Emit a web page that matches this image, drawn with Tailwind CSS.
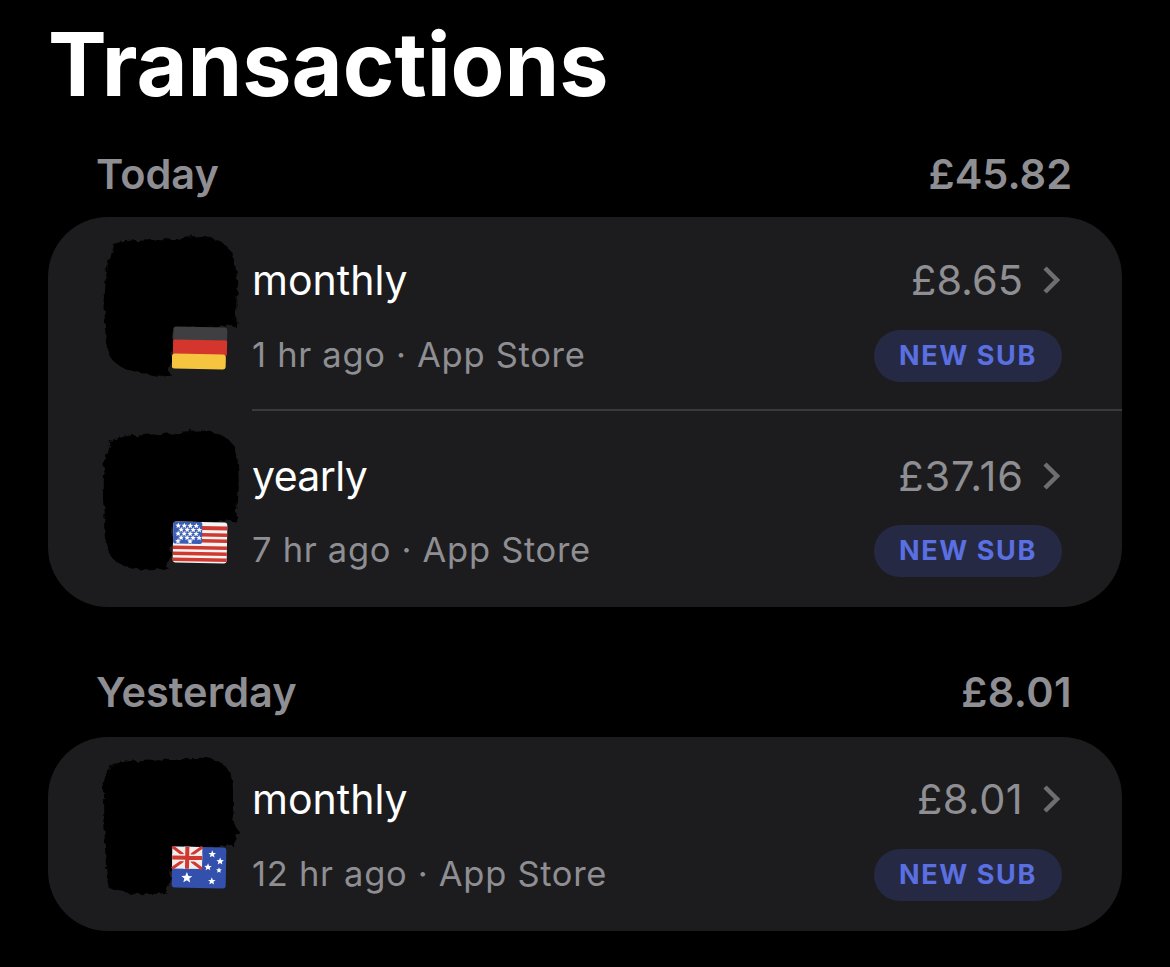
<!DOCTYPE html>
<html lang="en">
<head>
    <meta charset="UTF-8">
    <title>Transactions</title>
    <script src="https://cdn.jsdelivr.net/npm/@tailwindcss/browser@4"></script>
</head>
<body class="bg-black font-['Inter','Liberation_Sans',sans-serif] w-[1170px] h-[967px] overflow-hidden">
    <!-- shared bits for the flags and the scribbled-out app icons -->
    <svg class="absolute w-0 h-0">
        <defs>
            <filter id="rough" x="-10%" y="-10%" width="120%" height="120%">
                <feTurbulence type="fractalNoise" baseFrequency="0.12" numOctaves="3" seed="4"/>
                <feDisplacementMap in="SourceGraphic" scale="7"/>
            </filter>
            <path id="star" d="M0 -3 L0.8 -1 L2.9 -0.9 L1.3 0.4 L1.8 2.4 L0 1.3 L-1.8 2.4 L-1.3 0.4 L-2.9 -0.9 L-0.8 -1Z" fill="#fff"/>
        </defs>
    </svg>
    <main class="pl-[48px] pr-[48px]">
        <h1 class="pt-[16px] h-[105px] text-[88px] leading-[96px] font-bold text-white">Transactions</h1>

        <!-- Today -->
        <div class="flex justify-between items-center h-[50px] mt-[44px] pl-[48px] pr-[50px] text-[41.5px] font-semibold text-[#8e8e93]">
            <span>Today</span><span>£45.82</span>
        </div>
        <section class="mt-[18px] h-[390px] rounded-[60px] bg-[#1c1c1e] overflow-hidden">
            <!-- germany -->
            <div class="flex h-[192px]">
                <div class="relative ml-[56px] mt-[20px] w-[135px] h-[140px] shrink-0">
                    <svg viewBox="0 0 135 140" class="w-[135px] h-[140px] overflow-visible"><g transform="translate(-3.5 -3.5) scale(1.05)"><path filter="url(#rough)" fill="#000" d="M12 10 C30 4 60 6 80 3 C105 1 122 6 127 24 C132 45 131 70 129 88 L70 90 L66 134 C58 140 45 134 30 130 C14 126 6 120 5 100 C3 70 3 35 12 10Z"/></g></svg>
                    <svg viewBox="0 0 56 44" class="absolute left-[68px] top-[89px] w-[56px] h-[44px]"><g transform="rotate(1 28 22)"><rect x="1" y="1" width="54" height="14" rx="3" fill="#3f3f41"/><rect x="1" y="14" width="54" height="15" fill="#d4352d"/><rect x="0" y="28" width="54" height="15" rx="3" fill="#f5c53f"/></g></svg>
                </div>
                <div class="flex-1 min-w-0 ml-[13px] mr-[60px] pt-[40px]">
                    <div class="flex justify-between items-center h-[46px]">
                        <span class="text-[41px] leading-[46px] text-white">monthly</span>
                        <span class="flex items-center text-[41.5px] leading-[46px] text-[#8e8e93]">£8.65
                            <svg viewBox="0 0 18 30" class="ml-[19px] mr-[2px] w-[18px] h-[30px]"><path d="M3 3 L15 15 L3 27" fill="none" stroke="#6e6e72" stroke-width="4.5"/></svg>
                        </span>
                    </div>
                    <div class="flex justify-between items-center mt-[27px] h-[52px]">
                        <span class="pb-[2px] text-[34.5px] text-[#8e8e93] tracking-[0.7px]">1 hr ago · App Store</span>
                        <span class="flex items-center justify-center w-[188px] h-[52px] rounded-full bg-[#252944] text-[27px] font-bold tracking-[1.6px] text-[#5a6fe0]">NEW SUB</span>
                    </div>
                </div>
            </div>
            <div class="ml-[204px] h-[2px] bg-[#3a3a3c]"></div>
            <!-- usa -->
            <div class="flex h-[196px]">
                <div class="relative ml-[55px] mt-[21px] w-[135px] h-[140px] shrink-0">
                    <svg viewBox="0 0 135 140" class="w-[135px] h-[140px] overflow-visible"><g transform="translate(-3.5 -3.5) scale(1.05)"><path filter="url(#rough)" fill="#000" d="M10 12 C30 3 70 5 90 2 C112 2 128 8 131 25 C134 50 132 70 130 88 L70 90 L66 132 C50 138 30 134 18 128 C6 122 3 100 5 80 C3 50 4 30 10 12Z"/></g></svg>
                    <svg viewBox="0 0 56 44" class="absolute left-[69px] top-[89px] w-[56px] h-[44px]"><g transform="rotate(1 28 22)">
                        <rect x="1" y="1" width="54" height="41" rx="3" fill="#f4f4f4"/>
                        <g fill="#d0392f"><rect x="29" y="5" width="26" height="4"/><rect x="29" y="12" width="26" height="3.5"/><rect x="29" y="18" width="26" height="3.5"/><rect x="1" y="25" width="54" height="3.5"/><rect x="1" y="31" width="54" height="3.5"/><rect x="1" y="37" width="54" height="3.5"/></g>
                        <rect x="1" y="1" width="29" height="22" rx="2" fill="#3b5db5"/>
                        <use href="#star" x="6" y="5"/><use href="#star" x="12" y="5"/><use href="#star" x="18" y="5"/><use href="#star" x="24" y="5"/>
                        <use href="#star" x="9" y="9"/><use href="#star" x="15" y="9"/><use href="#star" x="21" y="9"/><use href="#star" x="27" y="9"/>
                        <use href="#star" x="6" y="13"/><use href="#star" x="12" y="13"/><use href="#star" x="18" y="13"/><use href="#star" x="24" y="13"/>
                        <use href="#star" x="9" y="17"/><use href="#star" x="15" y="17"/><use href="#star" x="21" y="17"/><use href="#star" x="27" y="17"/>
                        <use href="#star" x="6" y="20.5"/><use href="#star" x="18" y="20.5"/>
                    </g></svg>
                </div>
                <div class="flex-1 min-w-0 ml-[14px] mr-[60px] pt-[42px]">
                    <div class="flex justify-between items-center h-[46px]">
                        <span class="text-[41px] leading-[46px] tracking-[-0.6px] text-white">yearly</span>
                        <span class="flex items-center text-[41.5px] leading-[46px] tracking-[0.9px] text-[#8e8e93]">£37.16
                            <svg viewBox="0 0 18 30" class="ml-[18px] mr-[2px] w-[18px] h-[30px]"><path d="M3 3 L15 15 L3 27" fill="none" stroke="#6e6e72" stroke-width="4.5"/></svg>
                        </span>
                    </div>
                    <div class="flex justify-between items-center mt-[26px] h-[52px]">
                        <span class="pb-[2px] text-[34.5px] text-[#8e8e93] tracking-[0.7px]">7 hr ago · App Store</span>
                        <span class="flex items-center justify-center w-[188px] h-[52px] rounded-full bg-[#252944] text-[27px] font-bold tracking-[1.6px] text-[#5a6fe0]">NEW SUB</span>
                    </div>
                </div>
            </div>
        </section>

        <!-- Yesterday -->
        <div class="flex justify-between items-center h-[50px] mt-[60px] pl-[48px] pr-[50px] text-[41.5px] font-semibold text-[#8e8e93]">
            <span>Yesterday</span><span class="tracking-[0.4px]">£8.01</span>
        </div>
        <section class="mt-[20px] h-[194px] rounded-[60px] bg-[#1c1c1e] overflow-hidden">
            <div class="flex h-[194px]">
                <div class="relative ml-[56px] mt-[20px] w-[135px] h-[140px] shrink-0">
                    <svg viewBox="0 0 135 140" class="w-[135px] h-[140px] overflow-visible"><g transform="translate(-3.5 -3.5) scale(1.05)"><path filter="url(#rough)" fill="#000" d="M12 10 C35 4 70 6 95 4 C113 4 125 12 126 30 C127 50 124 65 133 75 L126 88 L70 90 L64 132 C50 136 25 134 8 128 C3 105 4 50 3 30 C4 20 7 14 12 10Z"/></g></svg>
                    <svg viewBox="0 0 56 44" class="absolute left-[67px] top-[89px] w-[56px] h-[44px]"><g transform="rotate(1 28 22)">
                        <rect x="1" y="1" width="54" height="41" rx="3" fill="#3350ad"/>
                        <rect x="1" y="1" width="30" height="22" fill="#f2ecec"/>
                        <path d="M1 1 L31 23 M31 1 L1 23" stroke="#d0392f" stroke-width="3"/>
                        <path d="M16 1 V23 M1 12 H31" stroke="#f2ecec" stroke-width="7"/>
                        <path d="M16 1 V23 M1 12 H31" stroke="#d0392f" stroke-width="4"/>
                        <use href="#star" transform="translate(16 32) scale(1.9)"/><use href="#star" transform="translate(41 8) scale(1.3)"/><use href="#star" transform="translate(49 15) scale(1.3)"/><use href="#star" transform="translate(37 21) scale(1.3)"/><use href="#star" x="48" y="24"/><use href="#star" transform="translate(41 35) scale(1.3)"/>
                    </g></svg>
                </div>
                <div class="flex-1 min-w-0 ml-[13px] mr-[60px] pt-[39px]">
                    <div class="flex justify-between items-center h-[46px]">
                        <span class="text-[41px] leading-[46px] text-white">monthly</span>
                        <span class="flex items-center text-[41.5px] leading-[46px] tracking-[0.4px] text-[#8e8e93]">£8.01
                            <svg viewBox="0 0 18 30" class="ml-[19px] mr-[2px] w-[18px] h-[30px]"><path d="M3 3 L15 15 L3 27" fill="none" stroke="#6e6e72" stroke-width="4.5"/></svg>
                        </span>
                    </div>
                    <div class="flex justify-between items-center mt-[27px] h-[52px]">
                        <span class="pb-[2px] text-[34.5px] text-[#8e8e93] tracking-[0.7px]">12 hr ago · App Store</span>
                        <span class="flex items-center justify-center w-[188px] h-[52px] rounded-full bg-[#252944] text-[27px] font-bold tracking-[1.6px] text-[#5a6fe0]">NEW SUB</span>
                    </div>
                </div>
            </div>
        </section>
    </main>
</body>
</html>
